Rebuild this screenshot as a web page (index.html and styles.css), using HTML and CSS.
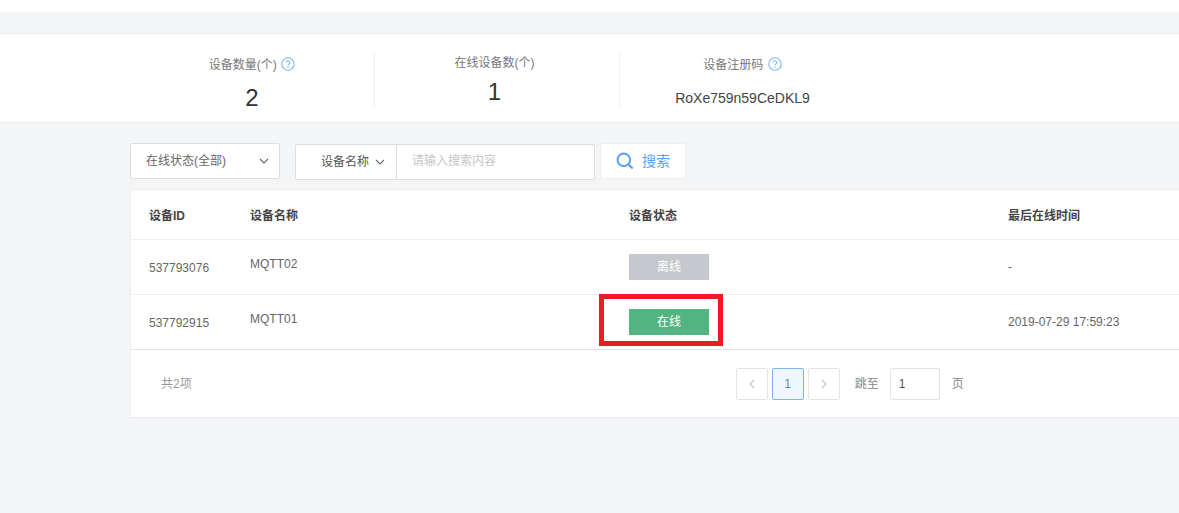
FILE: index.html
```html
<!DOCTYPE html>
<html lang="zh">
<head>
<meta charset="utf-8">
<title>设备</title>
<link rel="stylesheet" href="styles.css">
</head>
<body>
<div class="topbar"></div>
<section class="stats">
  <div class="stat">
    <div class="stat-label">设备数量(个) <svg class="help" viewBox="0 0 14 14"><circle cx="7" cy="7" r="6.2" fill="none" stroke="#7fb6f6" stroke-width="1.1"/><path d="M5.2 5.6a1.8 1.8 0 1 1 2.7 1.5c-.6.4-.9.7-.9 1.4" fill="none" stroke="#7fb6f6" stroke-width="1.1"/><circle cx="7" cy="10.3" r=".75" fill="#7fb6f6"/></svg></div>
    <div class="stat-value">2</div>
  </div>
  <div class="stat stat-mid">
    <div class="stat-label">在线设备数(个)</div>
    <div class="stat-value">1</div>
  </div>
  <div class="stat stat-last">
    <div class="stat-label">设备注册码 <svg class="help" viewBox="0 0 14 14"><circle cx="7" cy="7" r="6.2" fill="none" stroke="#7fb6f6" stroke-width="1.1"/><path d="M5.2 5.6a1.8 1.8 0 1 1 2.7 1.5c-.6.4-.9.7-.9 1.4" fill="none" stroke="#7fb6f6" stroke-width="1.1"/><circle cx="7" cy="10.3" r=".75" fill="#7fb6f6"/></svg></div>
    <div class="stat-code">RoXe759n59CeDKL9</div>
  </div>
</section>
<main class="content">
  <div class="filters">
    <div class="select"><span class="lift">在线状态(全部)</span><svg class="chev" viewBox="0 0 10 6"><path d="M1 1l4 4 4-4" fill="none" stroke="#666" stroke-width="1.1"/></svg></div>
    <div class="search">
      <div class="search-type"><span class="lift">设备名称</span><svg class="chev" viewBox="0 0 10 6"><path d="M1 1l4 4 4-4" fill="none" stroke="#666" stroke-width="1.1"/></svg></div>
      <div class="search-input">请输入搜索内容</div>
    </div>
    <div class="search-btn"><svg class="search-icon" viewBox="0 0 18 18"><circle cx="7.8" cy="7.8" r="6.3" fill="none" stroke="#5b9ff0" stroke-width="2"/><path d="M12.5 12.5l4.2 4" stroke="#5b9ff0" stroke-width="2" fill="none"/></svg><span class="lift-sm">搜索</span></div>
  </div>
  <div class="card">
    <div class="row head">
      <div>设备ID</div><div>设备名称</div><div>设备状态</div><div>最后在线时间</div>
    </div>
    <div class="row body-row">
      <div class="id">537793076</div><div class="name">MQTT02</div><div><span class="badge offline">离线</span></div><div class="time">-</div>
    </div>
    <div class="row body-row">
      <div class="id">537792915</div><div class="name">MQTT01</div><div><span class="badge online">在线<i class="mark"></i></span></div><div class="time">2019-07-29 17:59:23</div>
    </div>
    <div class="footer">
      <div class="total">共2项</div>
      <div class="pager">
        <span class="pg pg-off"><svg viewBox="0 0 6 10" class="arrow"><path d="M5 1L1 5l4 4" fill="none" stroke="#c4c4c4" stroke-width="1.2"/></svg></span>
        <span class="pg pg-on">1</span>
        <span class="pg pg-off"><svg viewBox="0 0 6 10" class="arrow"><path d="M1 1l4 4-4 4" fill="none" stroke="#c4c4c4" stroke-width="1.2"/></svg></span>
        <span class="jump">跳至</span>
        <span class="jump-input">1</span>
        <span class="page-word">页</span>
      </div>
    </div>
  </div>
</main>
</body>
</html>
```
FILE: styles.css
```css
* { box-sizing: border-box; }
html, body { margin: 0; height: 100%; }
body {
  width: 1179px;
  height: 513px;
  overflow: hidden;
  background: #f4f5f7;
  font-family: "Liberation Sans", "Noto Sans CJK SC", sans-serif;
  font-size: 12px;
  color: #666;
}
.topbar { height: 12px; background: #fff; }
.stats {
  margin-top: 21px;
  height: 90px;
  background: #fff;
  border-top: 1px solid #ebedf0;
  border-bottom: 1px solid #ebedf0;
  padding: 18px 0 0 130px;
  display: flex;
  align-items: flex-start;
}
.stat {
  width: 245px;
  height: 56px;
  border-right: 1px solid #f0f1f3;
  text-align: center;
  padding-top: 1px;
}
.stat-mid { padding-right: 5px; }
.stat-last { border-right: 0; }
.stat-label {
  height: 24px;
  line-height: 24px;
  color: #777;
  white-space: nowrap;
}
.stat-mid .stat-label { margin-top: -2px; }
.help { width: 14px; height: 14px; vertical-align: -2px; margin-left: 1px; }
.stat-value {
  margin-top: 7px;
  font-size: 24px;
  line-height: 28px;
  color: #333;
}
.stat-mid .stat-value { margin-top: 3px; }
.stat-code {
  margin-top: 11px;
  font-size: 14px;
  line-height: 20px;
  color: #444;
}
.content { padding: 20px 0 0 130px; }
.filters { display: flex; align-items: flex-start; height: 46px; }
.lift { margin-top: -3px; }
.lift-sm { margin-top: -2px; }
.select {
  width: 150px;
  height: 36px;
  background: #fff;
  border: 1px solid #dcdee0;
  border-radius: 2px;
  padding: 0 10px 0 15px;
  display: flex;
  align-items: center;
  justify-content: space-between;
  color: #666;
}
.search {
  margin: 1px 0 0 15px;
  width: 300px;
  height: 36px;
  background: #fff;
  border: 1px solid #dcdee0;
  border-radius: 2px;
  display: flex;
}
.search-type {
  width: 101px;
  padding-left: 25px;
  border-right: 1px solid #dcdee0;
  display: flex;
  align-items: center;
  gap: 6px;
  color: #555;
}
.search-input {
  padding-left: 15px;
  line-height: 32px;
  color: #c4c6ca;
}
.chev { width: 10px; height: 6px; flex: none; }
.search-btn {
  margin-left: 5px;
  width: 86px;
  height: 36px;
  background: #fff;
  border: 1px solid #eceef1;
  border-radius: 2px;
  display: flex;
  align-items: center;
  padding-left: 15px;
  gap: 8px;
  color: #5b9ff0;
  font-size: 14px;
}
.search-icon { width: 18px; height: 18px; flex: none; }
.card {
  width: 1100px;
  background: #fff;
  border: 1px solid #ebedf0;
  border-right: 0;
}
.row {
  display: grid;
  grid-template-columns: 101px 379px 379px 1fr;
  padding-left: 18px;
  align-items: center;
  border-bottom: 1px solid #eeeff1;
}
.head { height: 50px; font-weight: bold; color: #444; }
.body-row { height: 55px; }
.body-row:nth-child(3) { border-bottom-color: #e2e3e6; }
.id { padding-top: 1px; color: #666; }
.name { margin-top: -7px; color: #666; }
.time { color: #666; }
.badge {
  position: relative;
  display: block;
  width: 80px;
  height: 26px;
  line-height: 26px;
  text-align: center;
  color: #fff;
}
.offline { background: #c5c8cc; }
.online { background: #52b481; }
.mark {
  position: absolute;
  left: -30px;
  right: -14px;
  top: -15px;
  bottom: -11px;
  border: 5px solid #ed1c24;
}
.footer {
  height: 67px;
  position: relative;
  display: flex;
  padding-left: 30px;
}
.total { margin-top: 26px; line-height: 16px; color: #999; }
.pager {
  margin: 18px 0 0 544px;
  display: flex;
  align-items: center;
  height: 32px;
  gap: 4px;
}
.pg {
  width: 32px;
  height: 32px;
  border: 1px solid #e2e3e6;
  border-radius: 2px;
  display: flex;
  align-items: center;
  justify-content: center;
}
.arrow { width: 6px; height: 10px; }
.pg-on {
  background: #eef6ff;
  border-color: #7db3f2;
  color: #4a90e2;
}
.jump { margin-left: 11px; color: #888; line-height: 30px; }
.jump-input {
  margin-left: 7px;
  width: 50px;
  height: 32px;
  border: 1px solid #e2e3e6;
  border-radius: 2px;
  line-height: 30px;
  padding-left: 8px;
  color: #555;
}
.page-word { margin-left: 8px; color: #888; line-height: 30px; }
```
